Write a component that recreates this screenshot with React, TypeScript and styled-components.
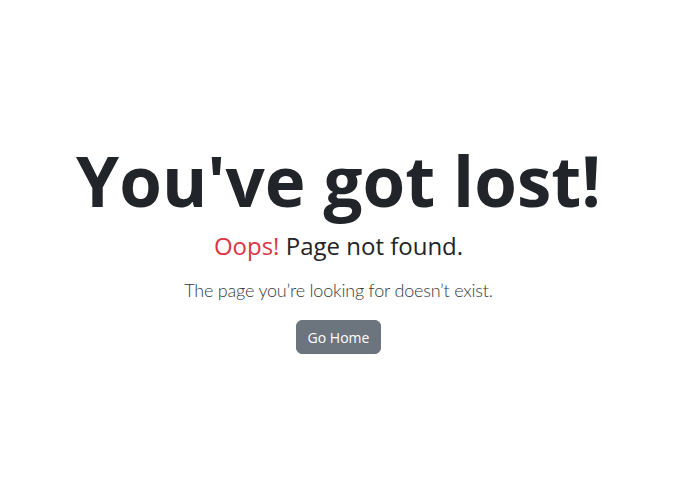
import React from 'react';
import styled, { createGlobalStyle } from 'styled-components';

const GlobalStyle = createGlobalStyle`
  html, body {
    margin: 0;
    padding: 0;
    background: #ffffff;
    font-family: "Open Sans", "Noto Sans", "Liberation Sans", sans-serif;
    color: #212529;
  }
`;

const Page = styled.main`
  box-sizing: border-box;
  min-height: 100vh;
  padding-right: 11px;
  display: flex;
  align-items: center;
  justify-content: center;
`;

const Content = styled.div`
  display: flex;
  flex-direction: column;
  align-items: center;
  text-align: center;
`;

const Title = styled.h1`
  margin: 0;
  font-size: 69px;
  font-weight: 700;
  line-height: 1.2;
  color: #212529;
`;

const Subtitle = styled.p`
  margin: 10px 0 0;
  font-size: 24px;
  font-weight: 400;
  line-height: 1.2;
`;

const Danger = styled.span`
  color: #dc3545;
`;

const Lead = styled.p`
  margin: 17px 0 0;
  font-family: Lato, "Open Sans", sans-serif;
  font-size: 18px;
  letter-spacing: -0.2px;
  font-weight: 300;
  line-height: 1.5;
  color: #343a40;
`;

const HomeButton = styled.a`
  margin-top: 16px;
  display: inline-flex;
  align-items: center;
  justify-content: center;
  box-sizing: border-box;
  height: 34px;
  padding: 0 11px;
  border: 1px solid #6c757d;
  border-radius: 6px;
  background: #6c757d;
  color: #ffffff;
  font-size: 14px;
  text-decoration: none;
  cursor: pointer;
  &:hover {
    background: #5c636a;
  }
`;

export default function App() {
  return (
    <>
      <GlobalStyle />
      <Page>
        <Content>
          <Title>You've got lost!</Title>
          <Subtitle>
            <Danger>Oops!</Danger> Page not found.
          </Subtitle>
          <Lead>The page you’re looking for doesn’t exist.</Lead>
          <HomeButton href="#">Go Home</HomeButton>
        </Content>
      </Page>
    </>
  );
}
